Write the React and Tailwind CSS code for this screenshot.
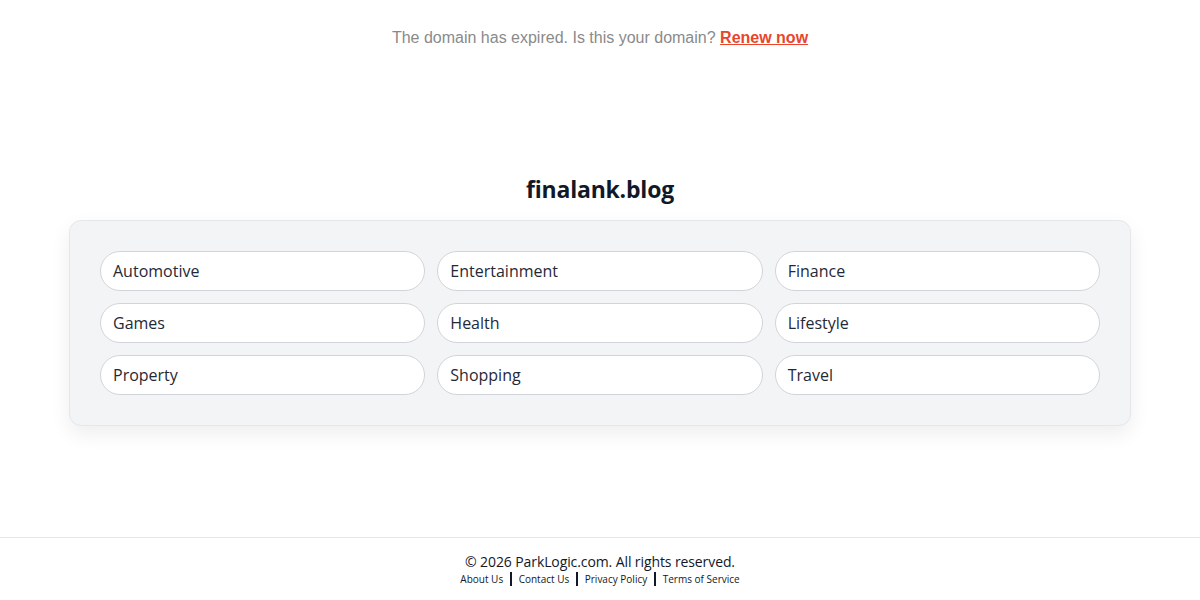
const categories = [
  'Automotive', 'Entertainment', 'Finance',
  'Games', 'Health', 'Lifestyle',
  'Property', 'Shopping', 'Travel',
];

const links = ['About Us', 'Contact Us', 'Privacy Policy', 'Terms of Service'];

const App = () => {
  return (
    <div className="min-h-[600px] flex flex-col bg-white" style={{ fontFamily: '"Open Sans", "Noto Sans", sans-serif' }}>
      <div className="pt-[28px] text-center text-[16px] leading-[20px] text-[#8a8a8a]" style={{ fontFamily: '"Liberation Sans", Arial, sans-serif' }}>
        The domain has expired. Is this your domain?{' '}
        <a href="#" className="font-bold text-[#e8452c] underline">Renew now</a>
      </div>

      <div className="flex-1">
        <h1 className="mt-[126px] text-center text-[23px] leading-[30px] font-bold text-[#111827] tracking-[-0.2px]">
          finalank.blog
        </h1>
        <div className="mt-[16px] mx-auto w-[1062px] rounded-xl border border-[#e5e7eb] bg-[#f3f4f6] p-[30px] shadow-[0_8px_20px_rgba(0,0,0,0.07)]">
          <div className="grid grid-cols-3 gap-x-[12px] gap-y-[12px]">
            {categories.map((c) => (
              <a
                key={c}
                href="#"
                className="h-[40px] flex items-center rounded-full border border-[#d1d5db] bg-white px-[12px] text-[16px] text-[#1f2937]"
              >
                {c}
              </a>
            ))}
          </div>
        </div>
      </div>

      <footer className="border-t border-[#e5e7eb] pt-[14px] pb-[14px] text-center text-[#111827]">
        <div className="text-[14px] leading-[20px] tracking-[-0.1px]">© 2026 ParkLogic.com. All rights reserved.</div>
        <div className="flex justify-center items-center text-[10px] leading-[14px]">
          {links.map((l, i) => (
            <span key={l} className="flex items-center">
              {i > 0 && <span className="mx-[7px] h-[14px] w-[1.5px] bg-[#111827]" />}
              <a href="#">{l}</a>
            </span>
          ))}
        </div>
      </footer>
    </div>
  );
};

export default App;
